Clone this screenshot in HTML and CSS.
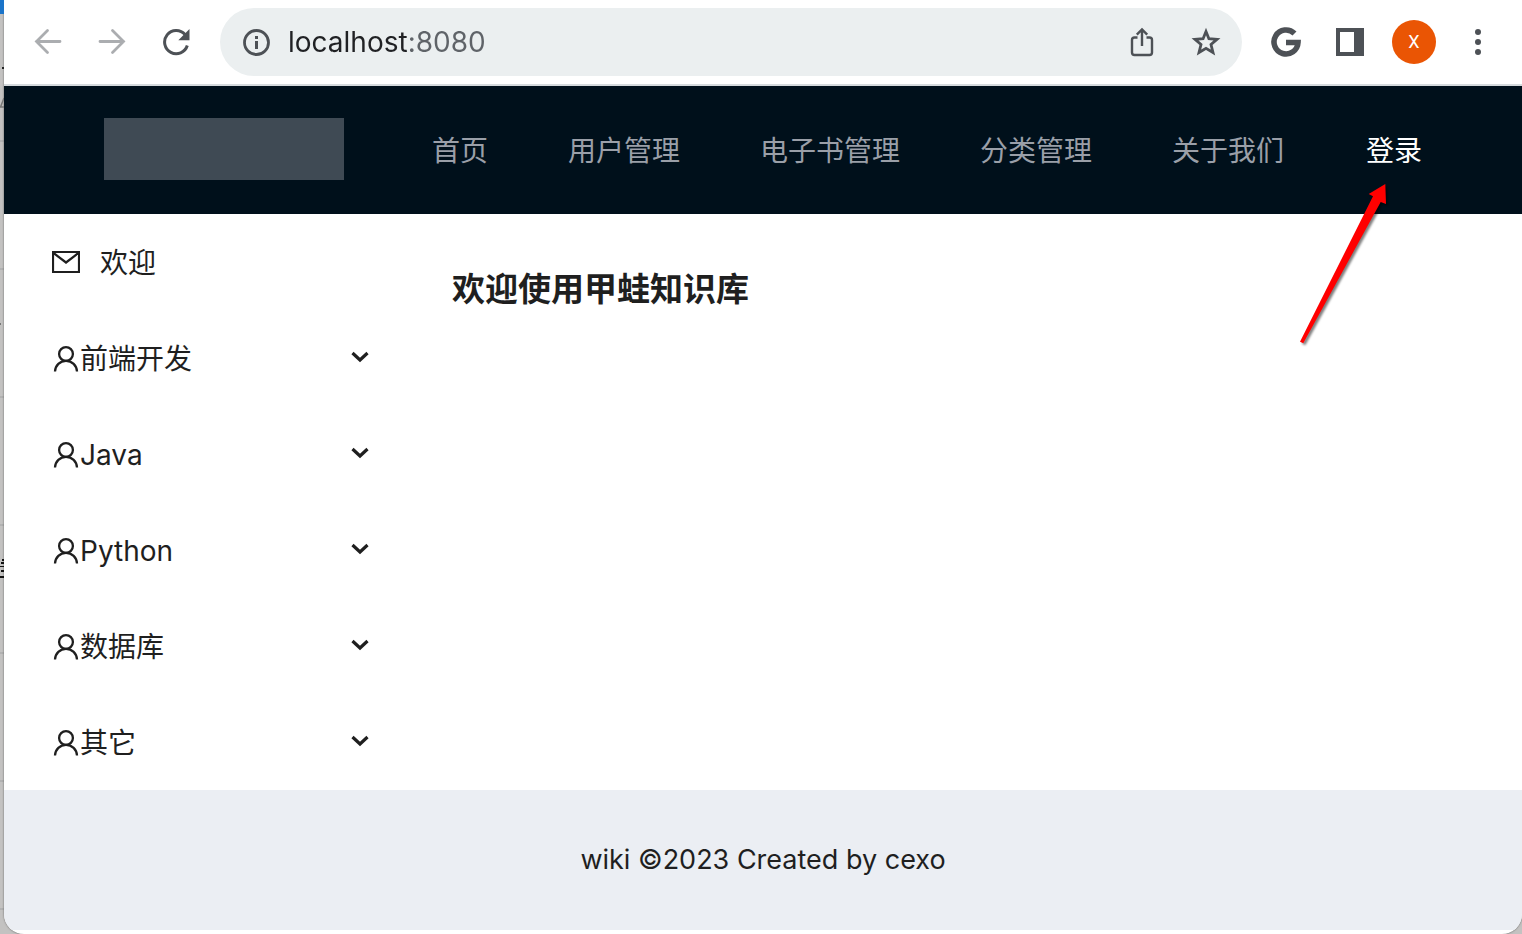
FILE: index.html
```html
<!DOCTYPE html>
<html lang="zh-CN">
<head>
<meta charset="utf-8">
<title>wiki</title>
<link rel="stylesheet" href="styles.css">
</head>
<body>

<!-- edge of the window behind -->
<svg class="backdrop" width="4" height="600" aria-hidden="true">
    <rect width="4" height="14" fill="#1b74c9"/>
    <rect x="2" y="67" width="2" height="2" fill="#222"/>
    <path d="M4 98L0.500 107H4" fill="none" stroke="#777" stroke-width="1.500"/>
    <rect y="323" width="1" height="2" fill="#777"/>
    <path d="M2 559h2v2H2zM1 562h3v2H1zM0 566h4v1H0zM1 570h3v2H1zM0 576h4v2H0z" fill="#111"/>
</svg>

<div class="window">
    <div class="toolbar">
        <button class="tool muted" aria-label="Back">
            <svg width="28" height="28" viewBox="0 0 28 28"><path d="M26 13.500H2.500M13.500 2.500L2.500 13.500L13.500 24.500" fill="none" stroke="currentColor" stroke-width="2.800" stroke-linecap="round"/></svg>
        </button>
        <button class="tool muted" aria-label="Forward">
            <svg width="28" height="28" viewBox="0 0 28 28"><path d="M2 13.500H25.500M14.500 2.500L25.500 13.500L14.500 24.500" fill="none" stroke="currentColor" stroke-width="2.800" stroke-linecap="round"/></svg>
        </button>
        <button class="tool" aria-label="Reload">
            <svg width="28" height="28" viewBox="0 0 28 28"><path d="M23 6.500A11.600 11.600 0 1 0 25.300 17.500" fill="none" stroke="currentColor" stroke-width="3"/><path d="M27.500 1V12.200H16.300z" fill="currentColor"/></svg>
        </button>

        <div class="omnibox">
            <svg class="info" width="28" height="28" viewBox="0 0 28 28"><circle cx="14.500" cy="14.500" r="12" fill="none" stroke="currentColor" stroke-width="2.800"/><path d="M13 8h3v3h-3zM13 13h3v8h-3z" fill="currentColor"/></svg>
            <input class="url" type="text" value="localhost:8080" aria-label="Address">
            <button class="tool" aria-label="Share">
                <svg width="28" height="32" viewBox="0 0 28 32"><path d="M9.500 11.500H6.500Q4 11.500 4 14V26.500Q4 29 6.500 29H21.500Q24 29 24 26.500V14Q24 11.500 21.500 11.500H18.500M14 20V4M8.800 8.700L14 3.500L19.200 8.700" fill="none" stroke="currentColor" stroke-width="2.400"/></svg>
            </button>
            <button class="tool" aria-label="Bookmark">
                <svg width="30" height="30" viewBox="0 0 30 30"><path d="M15 4.500L17.900 11.700L26 12.300L20 17.500L22 25.500L15 21.300L8 25.500L10 17.500L4 12.300L12.100 11.700z" fill="none" stroke="currentColor" stroke-width="2.800"/></svg>
            </button>
        </div>

        <button class="tool" aria-label="Google">
            <svg width="30" height="30" viewBox="0 0 30 30"><path d="M23.500 6.500A12 12 0 1 0 27 15.500H15" fill="none" stroke="currentColor" stroke-width="5.600"/></svg>
        </button>
        <button class="tool" aria-label="Side panel">
            <svg width="28" height="28" viewBox="0 0 28 28"><path fill-rule="evenodd" d="M0 0H28V28H0zM4 4V24H18V4z" fill="currentColor"/></svg>
        </button>
        <button class="tool" aria-label="Profile"><span class="avatar">X</span></button>
        <button class="tool" aria-label="Menu">
            <svg width="8" height="28" viewBox="0 0 8 28"><circle cx="4" cy="4" r="3"/><circle cx="4" cy="14" r="3"/><circle cx="4" cy="24" r="3"/></svg>
        </button>
    </div>

    <header class="header">
        <div class="logo"></div>
        <nav class="menu">
            <a href="#">首页</a>
            <a href="#">用户管理</a>
            <a href="#">电子书管理</a>
            <a href="#">分类管理</a>
            <a href="#">关于我们</a>
        </nav>
        <div class="login">
            <a href="#">登录</a>
            <svg class="arrow" width="96" height="176" viewBox="0 0 96 176" aria-hidden="true">
                <polygon points="89.300,6 72.700,16 77,18.300 4,163.700 7.300,165.300 84.700,24 90,26" fill="#f00"/>
            </svg>
        </div>
    </header>

    <div class="layout">
        <aside class="sider">
            <a class="item welcome" href="#">
                <svg width="28" height="28" viewBox="0 0 28 28"><path d="M1 3H27V23H1zM1.500 4L14 13.500L26.500 4" fill="none" stroke="currentColor" stroke-width="2.200"/></svg>
                <span>欢迎</span>
            </a>
            <button class="item">
                <svg width="28" height="28" viewBox="0 0 28 28"><use href="#user"/></svg>
                <span>前端开发</span>
                <svg class="chevron" width="20" height="20" viewBox="0 0 20 20"><use href="#down"/></svg>
            </button>
            <button class="item">
                <svg width="28" height="28" viewBox="0 0 28 28"><use href="#user"/></svg>
                <span>Java</span>
                <svg class="chevron" width="20" height="20" viewBox="0 0 20 20"><use href="#down"/></svg>
            </button>
            <button class="item">
                <svg width="28" height="28" viewBox="0 0 28 28"><use href="#user"/></svg>
                <span>Python</span>
                <svg class="chevron" width="20" height="20" viewBox="0 0 20 20"><use href="#down"/></svg>
            </button>
            <button class="item">
                <svg width="28" height="28" viewBox="0 0 28 28"><use href="#user"/></svg>
                <span>数据库</span>
                <svg class="chevron" width="20" height="20" viewBox="0 0 20 20"><use href="#down"/></svg>
            </button>
            <button class="item">
                <svg width="28" height="28" viewBox="0 0 28 28"><use href="#user"/></svg>
                <span>其它</span>
                <svg class="chevron" width="20" height="20" viewBox="0 0 20 20"><use href="#down"/></svg>
            </button>
        </aside>
        <main class="content">
            <h1>欢迎使用甲蛙知识库</h1>
        </main>
    </div>

    <footer class="footer">wiki ©2023 Created by cexo</footer>
</div>

<svg class="symbols" width="0" height="0" aria-hidden="true">
    <symbol id="user" viewBox="0 0 28 28"><path d="M3 26.500C3.300 20.500 8 15.800 14 15.800S24.700 20.500 25 26.500" fill="none" stroke="currentColor" stroke-width="2.300"/><circle cx="14" cy="9" r="6.900" fill="none" stroke="currentColor" stroke-width="2.300"/></symbol>
    <symbol id="down" viewBox="0 0 20 20"><path d="M2.500 6L10 13L17.500 6" fill="none" stroke="currentColor" stroke-width="3.200"/></symbol>
</svg>

</body>
</html>
```

FILE: styles.css
```css
* {
    box-sizing: border-box;
}
body {
    margin: 0;
    padding-left: 4px;
    min-height: 100vh;
    background: repeating-linear-gradient(#c3c2c1 0 12px, #b2b2b2 12px 14px, #c3c2c1 14px 128px);
    font-family: Inter, "Noto Sans CJK SC", sans-serif;
    font-size: 28px;
    line-height: 44px;
    color: #1f1f1f;
}
a {
    color: inherit;
    text-decoration: none;
}
button {
    border: 0;
    padding: 0;
    background: none;
    font: inherit;
    color: inherit;
    cursor: pointer;
}
svg {
    flex: none;
}
.backdrop {
    position: absolute;
    top: 0;
    left: 0;
}
.symbols {
    position: absolute;
}
.window {
    display: flex;
    flex-direction: column;
    min-height: 100vh;
    padding-bottom: 4px;
    background: #fff;
    border-radius: 0 0 20px 20px;
    box-shadow: 0 0 2px #555;
    overflow: hidden;
}

/* browser toolbar */
.toolbar {
    display: flex;
    align-items: center;
    padding: 8px 12px;
    border-bottom: 2px solid #d5dadd;
    color: #4d5156;
}
.tool {
    display: flex;
    align-items: center;
    justify-content: center;
    width: 64px;
    height: 64px;
    fill: currentColor;
}
.muted {
    color: #abadb0;
}
.omnibox {
    display: flex;
    align-items: center;
    flex: 1;
    height: 68px;
    margin: 0 12px;
    padding: 0 4px 0 22px;
    border-radius: 34px;
    background: #ebeff0;
}
.url {
    flex: 1;
    min-width: 0;
    margin-left: 18px;
    padding: 0;
    border: 0;
    outline: 0;
    font: 28px/40px Inter, sans-serif;
    /* host dark, port grey */
    background: linear-gradient(90deg, #202124 120px, #5f6368 120px);
    -webkit-background-clip: text;
    background-clip: text;
    -webkit-text-fill-color: transparent;
}
.avatar {
    width: 44px;
    height: 44px;
    border-radius: 50%;
    background: #ea5504;
    color: #fff;
    font: 18px/44px Roboto, sans-serif;
}

/* page header */
.header {
    display: flex;
    align-items: center;
    height: 128px;
    padding: 2px 100px 0;
    background: #00101b;
}
.logo {
    width: 240px;
    height: 62px;
    margin: 0 48px 4px 0;
    background: #3f4a54;
}
.menu {
    display: flex;
    color: #9a9fa8;
}
.menu a {
    padding: 0 40px;
}
.login {
    position: relative;
    margin-left: auto;
    color: #fff;
}
.arrow {
    position: absolute;
    top: 49px;
    right: 30px;
    filter: drop-shadow(2px 2px 1px rgba(0, 0, 0, 0.5));
    pointer-events: none;
}

/* body */
.layout {
    display: flex;
    flex: 1;
}
.sider {
    width: 400px;
}
.item {
    display: flex;
    align-items: center;
    width: 100%;
    height: 96px;
    padding: 2px 34px 0 48px;
}
.welcome {
    gap: 20px;
}
.chevron {
    margin-left: auto;
    margin-bottom: 4px;
}
.content {
    flex: 1;
    padding: 48px;
}
.content h1 {
    margin: 0;
    font-size: 33px;
    line-height: 54px;
    font-weight: 600;
}
.footer {
    padding: 48px;
    background: #ebeef3;
    font-size: 27px;
    text-align: center;
}
```
